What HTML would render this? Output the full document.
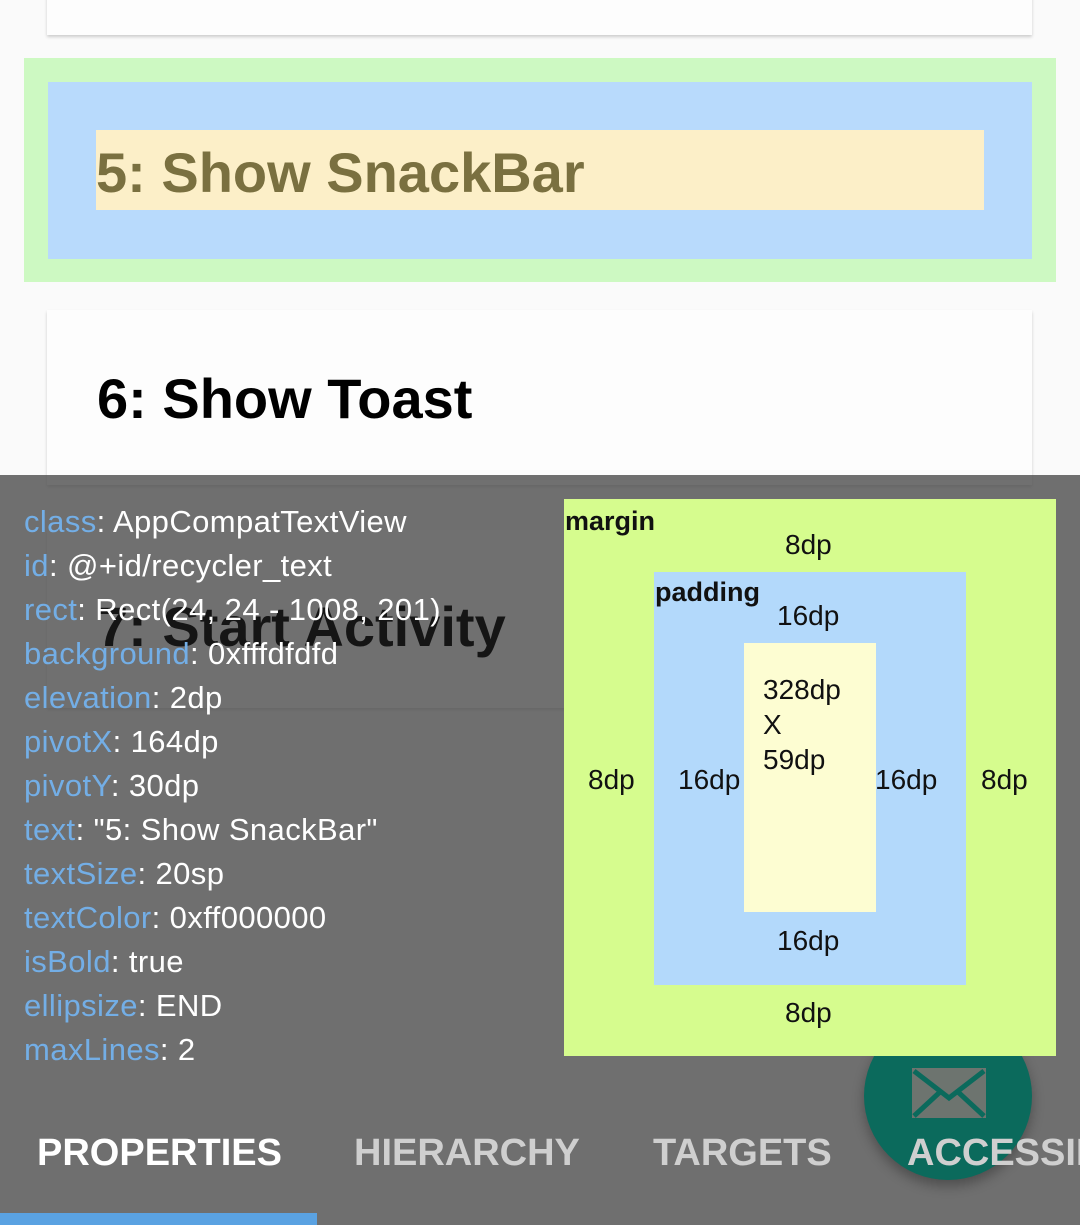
<!DOCTYPE html>
<html><head><meta charset="utf-8"><style>
*{margin:0;padding:0;box-sizing:border-box}
body{width:1080px;height:1225px;overflow:hidden;background:#fafafa;position:relative;font-family:"Liberation Sans",sans-serif}
.a{position:absolute}
.card{background:#fdfdfd;box-shadow:0 2px 3px rgba(0,0,0,.18)}
.t{font-weight:bold;font-size:56px;white-space:nowrap}
.p{position:absolute;left:24px;font-size:31px;letter-spacing:0.4px;color:#fff;white-space:nowrap}
.p b{font-weight:normal;color:#73aee6}
.bx{position:absolute;font-size:28px;color:#111;white-space:nowrap}
.tab{position:absolute;top:1132px;font-size:38px;font-weight:bold;color:#cfcfcf;white-space:nowrap}
</style></head><body>
<div class="a card" style="left:47px;top:-10px;width:985px;height:45px"></div>
<div class="a" style="left:24px;top:58px;width:1032px;height:224px;background:#cdf9c2"></div>
<div class="a" style="left:48px;top:82px;width:984px;height:177px;background:#b8dafc"></div>
<div class="a" style="left:96px;top:130px;width:888px;height:80px;background:#fcefc8"></div>
<div class="a t" style="left:96px;top:140px;color:#7a7040">5: Show SnackBar</div>
<div class="a card" style="left:47px;top:310px;width:985px;height:175px"></div>
<div class="a t" style="left:97px;top:366px;color:#000">6: Show Toast</div>
<div class="a card" style="left:47px;top:530px;width:985px;height:178px"></div>
<!-- overlay -->
<div class="a" style="left:0;top:475px;width:1080px;height:750px;background:rgba(80,80,80,.82)"></div>
<div class="a t" style="left:97px;top:594px;color:#151515">7: Start Activity</div>
<div class="p" style="top:504px"><b>class</b>: AppCompatTextView</div>
<div class="p" style="top:548px"><b>id</b>: @+id/recycler_text</div>
<div class="p" style="top:592px"><b>rect</b>: Rect(24, 24 - 1008, 201)</div>
<div class="p" style="top:636px"><b>background</b>: 0xfffdfdfd</div>
<div class="p" style="top:680px"><b>elevation</b>: 2dp</div>
<div class="p" style="top:724px"><b>pivotX</b>: 164dp</div>
<div class="p" style="top:768px"><b>pivotY</b>: 30dp</div>
<div class="p" style="top:812px"><b>text</b>: "5: Show SnackBar"</div>
<div class="p" style="top:856px"><b>textSize</b>: 20sp</div>
<div class="p" style="top:900px"><b>textColor</b>: 0xff000000</div>
<div class="p" style="top:944px"><b>isBold</b>: true</div>
<div class="p" style="top:988px"><b>ellipsize</b>: END</div>
<div class="p" style="top:1032px"><b>maxLines</b>: 2</div>
<!-- FAB -->
<div class="a" style="left:864px;top:1012px;width:168px;height:168px;border-radius:50%;background:#0b6a5c;box-shadow:0 6px 12px rgba(0,0,0,.3)"></div>
<svg class="a" style="left:912px;top:1068px" width="74" height="50" viewBox="0 0 74 50"><rect x="0" y="0" width="74" height="50" fill="#6d746f"/><path d="M2 3 L37 30 L72 3 M2 48 L28 24 M72 48 L46 24" stroke="#0b6a5c" stroke-width="5" fill="none"/></svg>
<!-- box model -->
<div class="a" style="left:564px;top:499px;width:492px;height:557px;background:#d6fc8e"></div>
<div class="a" style="left:654px;top:572px;width:312px;height:413px;background:#b3d9fb"></div>
<div class="a" style="left:744px;top:643px;width:132px;height:269px;background:#fdfdd2"></div>
<div class="bx" style="left:565px;top:506px;font-weight:bold;font-size:27px">margin</div>
<div class="bx" style="left:785px;top:529px">8dp</div>
<div class="bx" style="left:655px;top:577px;font-weight:bold;font-size:27px">padding</div>
<div class="bx" style="left:777px;top:600px">16dp</div>
<div class="bx" style="left:763px;top:672px;line-height:35px">328dp<br>X<br>59dp</div>
<div class="bx" style="left:588px;top:764px">8dp</div>
<div class="bx" style="left:678px;top:764px">16dp</div>
<div class="bx" style="left:875px;top:764px">16dp</div>
<div class="bx" style="left:981px;top:764px">8dp</div>
<div class="bx" style="left:777px;top:925px">16dp</div>
<div class="bx" style="left:785px;top:997px">8dp</div>
<div class="a" style="left:0;top:1100px;width:1080px;height:100px;overflow:hidden">
<div class="tab" style="top:32px;left:37px;color:#fff">PROPERTIES</div>
<div class="tab" style="top:32px;left:354px">HIERARCHY</div>
<div class="tab" style="top:32px;left:653px">TARGETS</div>
<div class="tab" style="top:32px;left:907px">ACCESSIBILITY</div>
</div>
<div class="a" style="left:0;top:1213px;width:317px;height:12px;background:#5aa2e2"></div>
</body></html>
